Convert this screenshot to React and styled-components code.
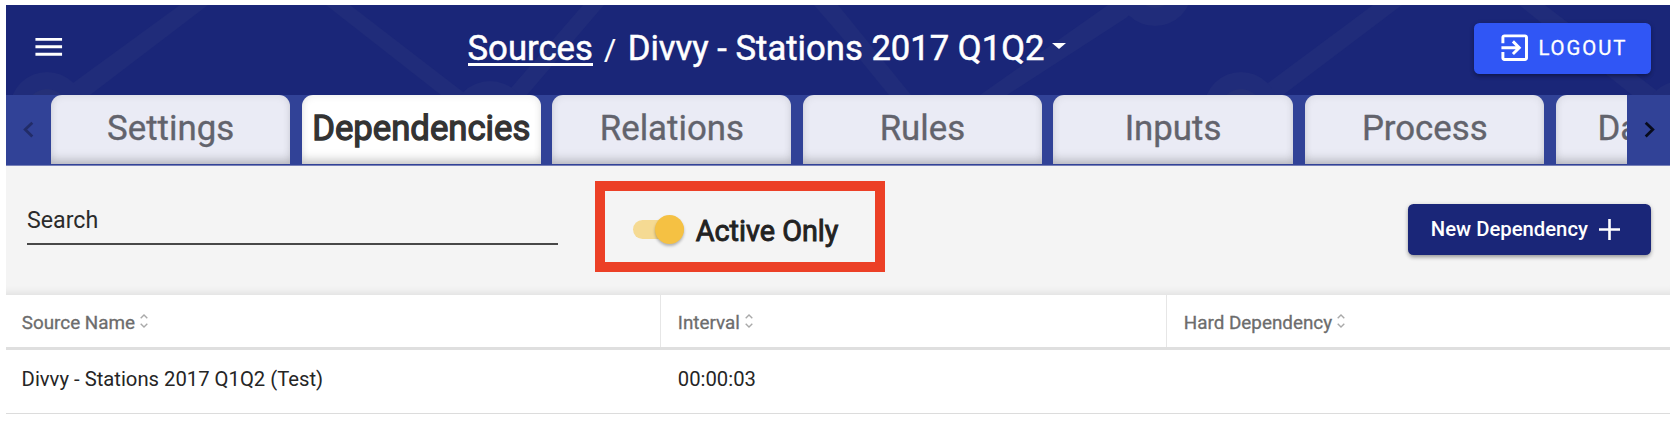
import React from "react";
import styled, { createGlobalStyle } from "styled-components";

const GlobalStyle = createGlobalStyle`
  * { box-sizing: border-box; }
  body { margin: 0; background: #fff; font-family: Roboto, "Liberation Sans", sans-serif; }
  button { font-family: inherit; border: 0; margin: 0; padding: 0; background: none; }
`;

const Page = styled.div`
  width: 1664px;
  margin: 5px 6px 0;
  color: #222;
`;

const Header = styled.header`
  position: relative;
  display: grid;
  grid-template-columns: 461.5px 1fr auto;
  align-items: start;
  height: 90px;
  background: #1a2678;
  overflow: hidden;
`;

const Pattern = styled.svg`
  position: absolute;
  inset: 0;
  width: 1664px;
  height: 90px;
`;

const MenuButton = styled.button`
  position: relative;
  width: 36px;
  height: 36px;
  margin: 24px 0 0 25px;
  svg { display: block; }
`;

const Title = styled.h1`
  position: relative;
  display: flex;
  align-items: baseline;
  margin: 0;
  padding-top: 22.5px;
  line-height: 40px;
  font-size: 34.65px;
  font-weight: 400;
  -webkit-text-stroke: 0.5px #fff;
  color: #fff;
  white-space: nowrap;
`;

const SourcesLink = styled.a`
  font-size: 34.7px;
  height: 38.2px;
  border-bottom: 3px solid #fff;
`;

const Slash = styled.span`
  font-size: 29.5px;
  -webkit-text-stroke: 0.2px #fff;
  margin: 0 11.6px 0 11px;
`;

const Caret = styled.svg`
  align-self: flex-start;
  margin: 15.5px 0 0 7.3px;
`;

const Button = styled.button`
  position: relative;
  display: flex;
  align-items: center;
  height: 51.5px;
  border-radius: 5.5px;
  color: #fff;
  font-size: 20.3px;
  font-weight: 500;
  white-space: nowrap;
  box-shadow: 0 3px 4px -1px rgba(0, 0, 0, 0.3), 0 1px 5px rgba(0, 0, 0, 0.18);
`;

const LogoutButton = styled(Button)`
  width: 177px;
  height: 51px;
  margin: 18px 19px 0 0;
  padding: 0 0 2px 23px;
  gap: 6px;
  background: #3056f5;
  font-weight: 400;
  -webkit-text-stroke: 0.3px #fff;
  letter-spacing: 1.95px;
`;

const TabStrip = styled.nav`
  display: flex;
  height: 70.7px;
  background: #314297;
  border-bottom: 1px solid #7881b8;
`;

const ScrollButton = styled.button`
  display: flex;
  justify-content: center;
  flex: none;
  width: ${(p) => p.$width};
  padding: ${(p) => p.$pad};
  color: ${(p) => p.$color};
`;

const TabList = styled.div`
  display: flex;
  flex: 1;
  gap: 11.3px;
  overflow: hidden;
`;

const Tab = styled.div`
  flex: none;
  width: 239.3px;
  height: 69px;
  margin-left: ${(p) => p.$nudge || "0"};
  border-radius: 11px 11px 0 0;
  text-align: center;
  line-height: 62px;
  padding-top: 2px;
  font-size: ${(p) => (p.$active ? "34.7px" : "34.8px")};
  -webkit-text-stroke: ${(p) => (p.$active ? "1.3px #333" : "0.35px #62636c")};
  color: ${(p) => (p.$active ? "#333" : "#62636c")};
  background: ${(p) => (p.$active ? "#fff" : "#eaebf5")};
  box-shadow: inset 0 -9px 11px -5px rgba(0, 0, 0, 0.2), inset 0 0 8px rgba(0, 0, 0, 0.09);
`;

const Toolbar = styled.section`
  display: flex;
  align-items: flex-start;
  height: 129.3px;
  padding: 0 19.5px 0 21px;
  background: #f4f4f4;
  box-shadow: inset 0 -11px 9px -9px rgba(0, 0, 0, 0.09);
`;

const SearchField = styled.div`
  width: 531.4px;
  height: 79px;
  padding-top: 39px;
  font-size: 23.2px;
  line-height: 31px;
  color: #2b2b2b;
  border-bottom: 2px solid #484848;
`;

const Highlight = styled.div`
  display: flex;
  align-items: flex-start;
  width: 290px;
  height: 91px;
  margin: 15.3px 0 0 36.6px;
  padding-left: 27.7px;
  border: 10px solid #ec4026;
`;

const Switch = styled.span`
  display: flex;
  align-items: center;
  justify-content: flex-end;
  width: 51px;
  height: 19.5px;
  margin-top: 29px;
  border-radius: 10px;
  background: #f5da93;
`;

const Thumb = styled.span`
  flex: none;
  width: 29.3px;
  height: 29.3px;
  margin-right: -0.8px;
  border-radius: 50%;
  background: #f5c143;
  box-shadow: 0 2px 3px rgba(0, 0, 0, 0.28);
`;

const SwitchLabel = styled.span`
  margin: 23.5px 0 0 12px;
  font-size: 28.8px;
  -webkit-text-stroke: 0.9px #222;
  line-height: 34px;
  white-space: nowrap;
`;

const NewButton = styled(Button)`
  width: 242.5px;
  margin: 38.3px 0 0 auto;
  padding: 0 0 1.5px 22.8px;
  gap: 11px;
  background: #1a2678;
  svg { margin-top: 2px; }
`;

const TableRow = styled.div`
  display: grid;
  grid-template-columns: 655px 506px 1fr;
  height: ${(p) => (p.$head ? "55px" : "64px")};
  border-bottom: ${(p) => (p.$head ? "3px solid #dfdfdf" : "1px solid #dcdcdc")};
`;

const HeadCell = styled.div`
  display: flex;
  align-items: center;
  gap: 5.2px;
  padding: 4px 0 0 16.8px;
  font-size: 18.85px;
  -webkit-text-stroke: 0.3px #6c6c6c;
  color: #6c6c6c;
  border-right: 1px solid #e6e6e6;
  &:first-child { padding-left: 15.8px; }
  &:last-child { border-right: 0; }
`;

const SortGlyph = styled.svg`
  margin-top: -2px;
`;

const Cell = styled.div`
  padding-left: 16.8px;
  font-size: 20.25px;
  line-height: 58px;
  color: #252525;
  &:first-child { padding-left: 15.6px; }
`;

const tabs = [
  { label: "Settings" },
  { label: "Dependencies", active: true },
  { label: "Relations" },
  { label: "Rules" },
  { label: "Inputs" },
  { label: "Process", nudge: "1.2px" },
  { label: "Data View" },
];

const columns = ["Source Name", "Interval", "Hard Dependency"];
const rows = [["Divvy - Stations 2017 Q1Q2 (Test)", "00:00:03", ""]];

function HeaderPattern() {
  return (
    <Pattern viewBox="6 5 1664 90">
      <g fill="#202c7a">
        <path d="M180 5H208L90 95H60L73 83Z" />
        <path d="M326 5H350L463 92V95H441Z" />
        <path d="M583 5H604L527 95H500L511 88Z" />
        <path d="M814 5H838L911 95H889L840 35Z" />
        <path d="M1108 5H1140L1126 18L1007 95H980Z" />
        <path d="M1373 5H1402L1283 95H1255L1268 83Z" />
        <path d="M1519 5H1545L1656 90V95H1632Z" />
        <circle cx="47" cy="109" r="37" />
        <circle cx="490" cy="119" r="38" />
        <circle cx="935" cy="131" r="37" />
        <circle cx="1155" cy="-11" r="37" />
        <circle cx="1241" cy="109" r="37" />
        <circle cx="1681" cy="118" r="37" />
      </g>
      <g fill="#253078">
        <circle cx="47" cy="109" r="20" />
        <circle cx="1155" cy="-11" r="19" />
        <circle cx="1241" cy="109" r="20" />
      </g>
    </Pattern>
  );
}

function Chevron({ left }) {
  return (
    <svg width="12" height="17" viewBox="0 0 12 17" fill="none" stroke="currentColor" strokeWidth="2.8">
      <path d={left ? "M10.3 1.7L3.2 8.6L10.3 15.5" : "M1.7 1.7L8.8 8.6L1.7 15.5"} />
    </svg>
  );
}

function SortIcon() {
  return (
    <SortGlyph width="8" height="15" viewBox="0 0 8 15" fill="none" stroke="#a9a9a9" strokeWidth="1.4">
      <path d="M0.7 4.3L4 1.1L7.3 4.3M0.7 9.7L4 12.9L7.3 9.7" />
    </SortGlyph>
  );
}

export default function App() {
  return (
    <>
      <GlobalStyle />
      <Page>
        <Header>
          <HeaderPattern />
          <MenuButton aria-label="Menu">
            <svg width="35.5" height="35.5" viewBox="0 0 24 24" fill="#fff">
              <path d="M3 18h18v-2H3v2zm0-5h18v-2H3v2zm0-7v2h18V6H3z" />
            </svg>
          </MenuButton>
          <Title>
            <SourcesLink>Sources</SourcesLink>
            <Slash>/</Slash>
            <span>Divvy - Stations 2017 Q1Q2</span>
            <Caret width="14" height="6" viewBox="0 0 14 6" fill="#fff">
              <path d="M0 0H14L7 6Z" />
            </Caret>
          </Title>
          <LogoutButton>
            <svg width="35.4" height="35.4" viewBox="0 0 24 24" fill="currentColor">
              <path d="M10.09 15.59L11.5 17l5-5-5-5-1.41 1.41L12.67 11H3v2h9.67l-2.58 2.59zM19 3H5c-1.11 0-2 .9-2 2v4h2V5h14v14H5v-4H3v4c0 1.1.89 2 2 2h14c1.1 0 2-.9 2-2V5c0-1.1-.9-2-2-2z" />
            </svg>
            LOGOUT
          </LogoutButton>
        </Header>
        <TabStrip>
          <ScrollButton $width="45px" $pad="26px 2px 0 0" $color="#222c68" aria-label="Previous tabs">
            <Chevron left />
          </ScrollButton>
          <TabList>
            {tabs.map((t) => (
              <Tab key={t.label} $active={t.active} $nudge={t.nudge}>
                {t.label}
              </Tab>
            ))}
          </TabList>
          <ScrollButton $width="43px" $pad="26px 0 0 3px" $color="#080b1c" aria-label="Next tabs">
            <Chevron />
          </ScrollButton>
        </TabStrip>
        <Toolbar>
          <SearchField>Search</SearchField>
          <Highlight>
            <Switch>
              <Thumb />
            </Switch>
            <SwitchLabel>Active Only</SwitchLabel>
          </Highlight>
          <NewButton>
            New Dependency
            <svg width="21" height="21" viewBox="0 0 21 21" stroke="#fff" strokeWidth="2.6">
              <path d="M10.5 0V21M0 10.5H21" />
            </svg>
          </NewButton>
        </Toolbar>
        <TableRow $head>
          {columns.map((c) => (
            <HeadCell key={c}>
              {c}
              <SortIcon />
            </HeadCell>
          ))}
        </TableRow>
        {rows.map((r) => (
          <TableRow key={r[0]}>
            {r.map((v, i) => (
              <Cell key={i}>{v}</Cell>
            ))}
          </TableRow>
        ))}
      </Page>
    </>
  );
}
